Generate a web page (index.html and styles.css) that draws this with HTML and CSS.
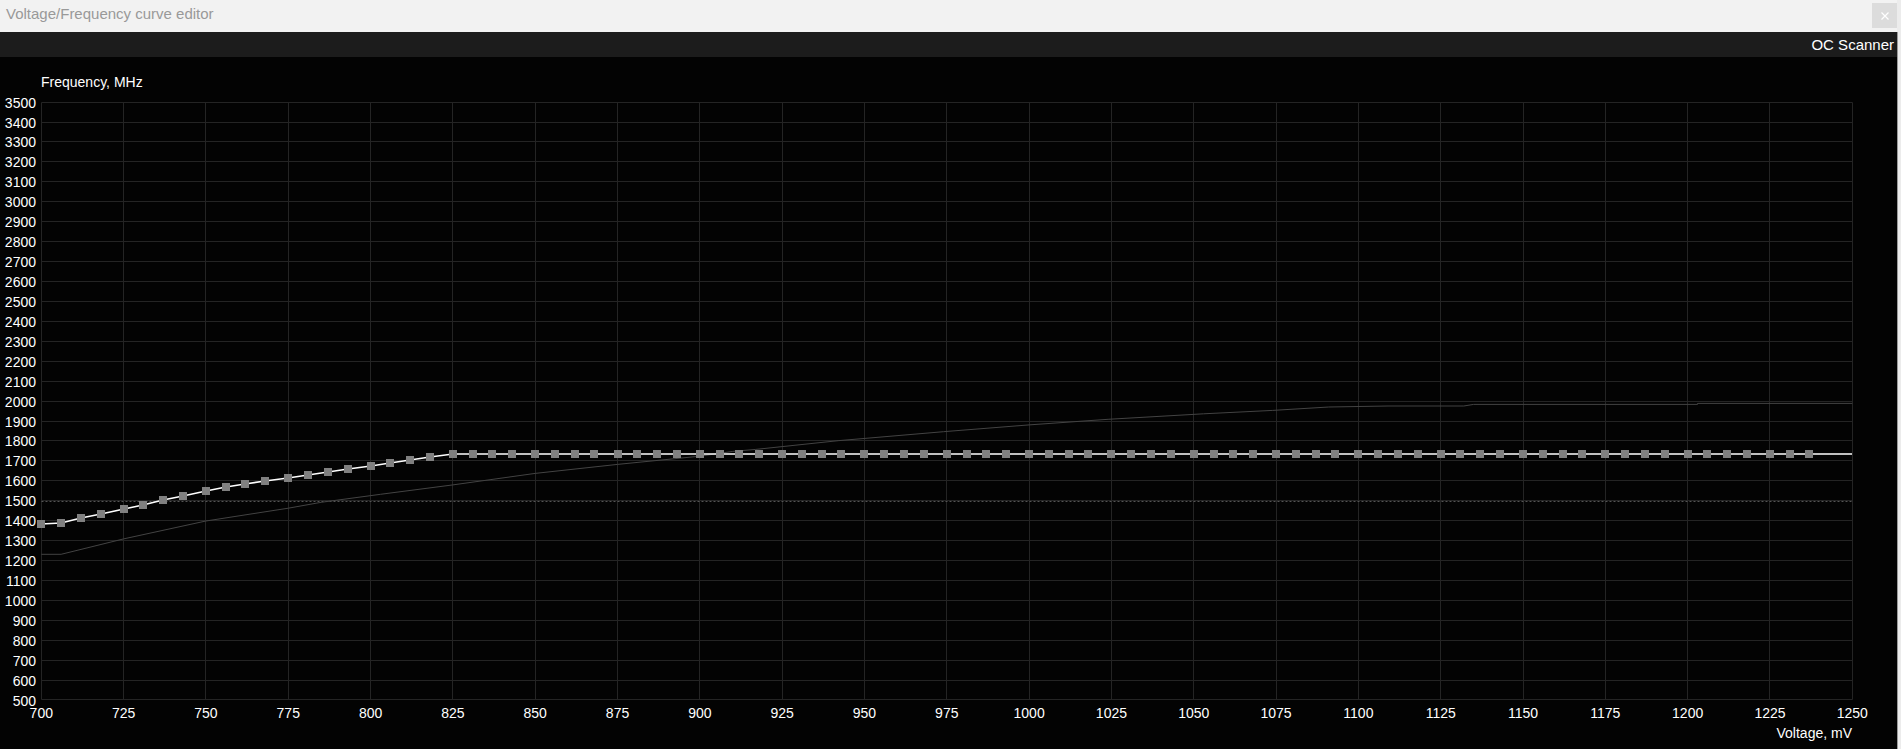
FILE: index.html
```html
<!DOCTYPE html>
<html lang="en">
<head>
  <meta charset="UTF-8">
  <title>Voltage/Frequency curve editor</title>
  <link rel="stylesheet" href="styles.css">
</head>
<body>
  <div class="titlebar">
    <span class="title">Voltage/Frequency curve editor</span>
    <button class="close" type="button" title="Close">
      <svg width="8" height="8" viewBox="0 0 8 8">
        <path d="M0.5 0.5 L7.5 7.5 M7.5 0.5 L0.5 7.5" stroke="#fff" stroke-width="1.2" fill="none"/>
      </svg>
    </button>
  </div>
  <div class="main">
    <div class="toolbar">
      <button class="scan" type="button">OC Scanner</button>
    </div>
    <div class="chart">
      <svg id="curve" width="1897" height="692"></svg>
    </div>
  </div>

  <script>
    const NS = "http://www.w3.org/2000/svg";
    const svg = document.getElementById("curve");

    // plot box inside the svg (svg starts 57px down the page)
    const X0 = 41.3, X1 = 1852.3;
    const Y0 = 44.6, Y1 = 642.6;
    const vx = v => X0 + (v - 700) * (X1 - X0) / 550;
    const fy = f => Y0 + (3500 - f) * (Y1 - Y0) / 3000;

    function el(name, attrs, text) {
      const node = document.createElementNS(NS, name);
      for (const k in attrs) node.setAttribute(k, attrs[k]);
      if (text) node.textContent = text;
      svg.appendChild(node);
      return node;
    }

    const gridLeft = Math.floor(X0) + 0.5, gridRight = Math.floor(X1) + 0.5;
    const gridTop = Math.round(fy(3500)) + 0.5, gridBottom = Math.round(fy(500)) - 0.5;

    // horizontal grid + frequency labels
    for (let f = 500; f <= 3500; f += 100) {
      const y = f === 500 ? gridBottom : Math.round(fy(f)) + 0.5;
      el("line", { x1: gridLeft, x2: gridRight, y1: y, y2: y, class: "grid" });
      el("text", { x: 36, y: fy(f) + 6, "text-anchor": "end" }, String(f));
    }

    // vertical grid + voltage labels
    for (let v = 700; v <= 1250; v += 25) {
      const x = Math.floor(vx(v)) + 0.5;
      el("line", { x1: x, x2: x, y1: gridTop, y2: gridBottom, class: "grid" });
      el("text", { x: vx(v), y: 661, "text-anchor": "middle" }, String(v));
    }

    el("text", { x: 41, y: 30 }, "Frequency, MHz");
    el("text", { x: 1852, y: 681, "text-anchor": "end" }, "Voltage, mV");

    // current clock limit
    const dy = Math.round(fy(1495)) + 0.5;
    el("line", { x1: gridLeft, x2: gridRight, y1: dy, y2: dy, class: "limit" });

    // default curve
    const base = [
      [700, 1229], [706, 1229], [725, 1306], [750, 1396], [775, 1460], [785, 1490],
      [803, 1530], [825, 1577], [850, 1635], [875, 1680], [900, 1721], [910, 1745],
      [917, 1755], [942, 1799], [974, 1844], [1000, 1878], [1024, 1906], [1053, 1934],
      [1074, 1951], [1091, 1968], [1109, 1973], [1132, 1973], [1135, 1981], [1203, 1981],
      [1203, 1986], [1250, 1986]
    ];
    el("polyline", {
      points: base.map(p => vx(p[0]).toFixed(1) + "," + fy(p[1]).toFixed(1)).join(" "),
      class: "base"
    });

    // edited curve, one point every 6.25 mV
    const rise = [1381, 1387, 1412, 1431, 1458, 1476, 1501, 1520, 1548, 1568, 1583,
                  1598, 1612, 1628, 1642, 1658, 1673, 1688, 1702, 1718, 1732];
    const pts = [];
    for (let k = 0; k <= 86; k++) {
      const v = Math.floor(700 + 6.25 * k);
      const f = k < rise.length ? rise[k] : 1732;
      pts.push([Math.round(vx(v)), Math.round(fy(f))]);
    }
    const line = pts.map(p => p[0] + "," + p[1]);
    line.push(Math.floor(X1) + "," + pts[pts.length - 1][1]);
    el("polyline", { points: line.join(" "), class: "curve" });

    pts.forEach(p => {
      el("rect", { x: p[0] - 4, y: p[1] - 4, width: 8, height: 8, class: "point" });
    });
  </script>
</body>
</html>
```

FILE: styles.css
```css
body {
  margin: 0;
  background: #ececec;
  font-family: "Liberation Sans", Arial, sans-serif;
  overflow: hidden;
}
.titlebar {
  width: 1897px;
  height: 32px;
  background: #f2f2f2;
  display: flex;
  justify-content: space-between;
  align-items: flex-start;
}
.title {
  color: #999;
  font-size: 15px;
  line-height: 17px;
  padding: 5px 0 0 6px;
}
.close {
  width: 25px;
  height: 25px;
  margin-top: 3px;
  padding: 0;
  border: none;
  background: #dcdcdc;
  display: flex;
  align-items: center;
  justify-content: center;
}
.main {
  width: 1897px;
  height: 717px;
  border-right: 1px solid #9a9a9a;
  display: flex;
  flex-direction: column;
}
.toolbar {
  height: 25px;
  box-sizing: border-box;
  background: #1c1c1c;
  display: flex;
  justify-content: flex-end;
  padding: 4px 3px 0 0;
}
.scan {
  color: #fff;
  background: none;
  border: none;
  padding: 0;
  font: 15px/17px "Liberation Sans", Arial, sans-serif;
  height: 17px;
}
.chart {
  flex: 1;
  background: #030303;
}
.chart svg {
  display: block;
}
.chart text {
  font-family: "Liberation Sans", Arial, sans-serif;
  font-size: 14px;
  fill: #fff;
}
.grid {
  stroke: #242424;
  stroke-width: 1;
}
.limit {
  stroke: #555;
  stroke-width: 1;
  stroke-dasharray: 2 2;
}
.base {
  fill: none;
  stroke: #434343;
  stroke-width: 1;
}
.curve {
  fill: none;
  stroke: #fff;
  stroke-width: 1.6;
}
.point {
  fill: #808080;
}
```
